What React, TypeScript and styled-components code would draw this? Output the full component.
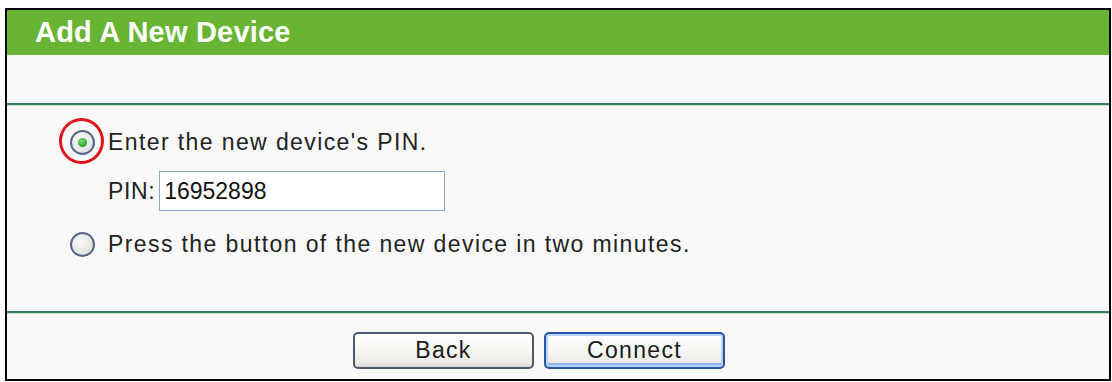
import React from "react";
import styled, { createGlobalStyle } from "styled-components";

const Global = createGlobalStyle`
  html, body { margin: 0; padding: 0; background: #ffffff; }
  body { font-family: "Liberation Sans", Arial, sans-serif; }
`;

const Panel = styled.div`
  margin: 8px 0 0 5px;
  width: 1106px;
  height: 373px;
  box-sizing: border-box;
  border: 2px solid #000;
  background: #f9f9f9;
  display: flex;
  flex-direction: column;
`;

const Header = styled.div`
  height: 45px;
  background: #68b533;
  color: #fff;
  font-weight: bold;
  font-size: 29px;
  letter-spacing: 0.2px;
  display: flex;
  align-items: center;
  padding-left: 28px;
  padding-bottom: 1px;
  box-sizing: border-box;
`;

const Blank = styled.div`
  height: 48px;
`;

const Separator = styled.div`
  height: 2px;
  background: #3b7b5a;
  border-bottom: 1px solid #c9dccf;
`;

const Content = styled.div`
  height: 205px;
  padding: 16px 0 0 63px;
  box-sizing: border-box;
  display: flex;
  flex-direction: column;
`;

const Row = styled.div<{ $mt?: number; $indent?: number }>`
  height: 40px;
  margin-top: ${(p) => p.$mt ?? 0}px;
  padding-left: ${(p) => p.$indent ?? 0}px;
  display: flex;
  align-items: center;
  font-size: 23px;
  letter-spacing: 1.4px;
  color: #222;
`;

const RadioWrap = styled.span`
  position: relative;
  width: 25px;
  height: 25px;
  margin-right: 13px;
  flex: none;
`;

const Radio = styled.span<{ $checked?: boolean }>`
  display: block;
  width: 25px;
  height: 25px;
  box-sizing: border-box;
  border-radius: 50%;
  border: 2px solid #53648a;
  background: radial-gradient(circle at 40% 35%, #f8f8f6 0%, #e6e6e2 60%, #d4d4d0 100%);
  position: relative;
  &::after {
    content: "";
    display: ${(p) => (p.$checked ? "block" : "none")};
    position: absolute;
    left: 50%;
    top: 50%;
    width: 9px;
    height: 9px;
    margin: -4.5px 0 0 -4.5px;
    border-radius: 50%;
    background: radial-gradient(circle at 40% 35%, #7de07a 0%, #2fae2c 60%, #1f8a1e 100%);
  }
`;

const Highlight = styled.span`
  position: absolute;
  left: -11px;
  top: -12px;
  width: 45px;
  height: 46px;
  box-sizing: border-box;
  border: 3px solid #e3141c;
  border-radius: 50%;
`;

const Label = styled.span`
  white-space: nowrap;
`;

const PinLabel = styled.span`
  margin-right: 4px;
  letter-spacing: 0.6px;
`;

const PinInput = styled.input`
  width: 286px;
  height: 40px;
  box-sizing: border-box;
  border: 1px solid #8aa6c0;
  background: #fff;
  font-family: "Liberation Sans", Arial, sans-serif;
  font-size: 23px;
  letter-spacing: 0;
  color: #111;
  padding: 0 0 0 4px;
  margin: 0;
  outline: none;
`;

const ButtonBar = styled.div`
  flex: 1;
  display: flex;
  align-items: flex-start;
  padding: 18px 0 0 346px;
  gap: 10px;
`;

const Button = styled.button<{ $primary?: boolean }>`
  width: 181px;
  height: 37px;
  box-sizing: border-box;
  border-radius: 5px;
  border: 2px solid ${(p) => (p.$primary ? "#2b53a3" : "#4a5872")};
  background: linear-gradient(#ffffff 0%, #f7f7f4 45%, #ecebe6 85%, #d8d7d0 100%);
  box-shadow: ${(p) =>
    p.$primary ? "inset 0 0 0 2px #b9d1f6, inset 0 -2px 0 2px #8db2ee" : "none"};
  font-family: "Liberation Sans", Arial, sans-serif;
  font-size: 23px;
  letter-spacing: 1.3px;
  color: #1a1a1a;
  padding: 0;
  cursor: pointer;
`;

export default function App() {
  return (
    <>
      <Global />
      <Panel>
        <Header>Add A New Device</Header>
        <Blank />
        <Separator />
        <Content>
          <Row>
            <RadioWrap>
              <Radio $checked />
              <Highlight />
            </RadioWrap>
            <Label>Enter the new device's PIN.</Label>
          </Row>
          <Row $mt={9} $indent={38}>
            <PinLabel>PIN:</PinLabel>
            <PinInput defaultValue="16952898" />
          </Row>
          <Row $mt={13}>
            <RadioWrap>
              <Radio />
            </RadioWrap>
            <Label>Press the button of the new device in two minutes.</Label>
          </Row>
        </Content>
        <Separator />
        <ButtonBar>
          <Button>Back</Button>
          <Button $primary>Connect</Button>
        </ButtonBar>
      </Panel>
    </>
  );
}
